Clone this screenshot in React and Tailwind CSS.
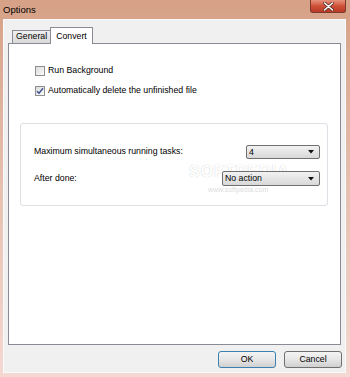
import React, { useState } from 'react';

const font = { fontFamily: '"Liberation Sans", Arial, sans-serif' };

function Checkbox({ checked, label, onChange }) {
  return (
    <label className="flex items-center h-[12px] cursor-default" onClick={onChange}>
      <span className="w-[10px] h-[10px] border border-[#8f8f8f] bg-gradient-to-br from-[#dcdcdc] to-[#fafafa] flex items-center justify-center">
        {checked && (
          <svg width="8" height="8" viewBox="0 0 8 8">
            <path d="M1 4.2 L3 6.3 L7 1.2" fill="none" stroke="#3b4f8a" strokeWidth="1.4" />
          </svg>
        )}
      </span>
      <span className="ml-[3px] text-[8.75px] text-black">{label}</span>
    </label>
  );
}

function Combo({ value, width, height }) {
  return (
    <div
      className={`${width} ${height} rounded-[2px] border border-[#707070] bg-gradient-to-b from-[#f2f2f2] to-[#d8d8d8] flex items-center justify-between pl-[2px] pr-[5px]`}
    >
      <span className="text-[8.75px] text-black leading-none">{value}</span>
      <svg width="6" height="4" viewBox="0 0 6 4">
        <path d="M0 0 H6 L3 3.5 Z" fill="#111" />
      </svg>
    </div>
  );
}

export default function App() {
  const [runBg, setRunBg] = useState(false);
  const [autoDelete, setAutoDelete] = useState(true);

  return (
    <div className="w-[350px] h-[377px] flex flex-col bg-gradient-to-b from-[#d6a186] via-[#e6c0b0] to-[#f4d8d2] overflow-hidden" style={font}>
      {/* title bar */}
      <div className="h-[19px] flex items-start justify-between">
        <span className="ml-[3px] mt-[3px] text-[9.5px] text-black">Options</span>
        <div className="mr-[4px] w-[36px] h-[13px] rounded-b-[3px] border border-t-0 border-[#7b3b2c] bg-gradient-to-b from-[#e6927c] via-[#cf5037] to-[#b83a25] flex items-center justify-center">
          <svg width="11" height="9" viewBox="0 0 11 9">
            <path d="M1.5 1 L9.5 8 M9.5 1 L1.5 8" stroke="#5a2a20" strokeWidth="3" strokeLinecap="round" />
            <path d="M1.5 1 L9.5 8 M9.5 1 L1.5 8" stroke="#ffffff" strokeWidth="1.6" strokeLinecap="round" />
          </svg>
        </div>
      </div>

      {/* client area */}
      <div className="ml-[3px] mr-[4px] mb-[4px] flex-1 bg-[#f0f0f0] border border-[#fafafa] flex flex-col">
        {/* tabs */}
        <div className="flex items-end ml-[6px] mt-[6px] h-[17px]">
          <div className="h-[13px] px-[3px] ml-[2px] border border-b-0 border-[#898c95] bg-gradient-to-b from-[#f0f0f0] to-[#d9d9d9] flex items-center text-[8.75px] text-black">
            General
          </div>
          <div className="h-[17px] px-[5px] -ml-[1px] border border-b-0 border-[#898c95] bg-white flex items-start pt-[2px] text-[8.75px] text-black relative top-[1px] z-10">
            Convert
          </div>
        </div>

        {/* tab panel */}
        <div className="ml-[4px] w-[333px] h-[302px] bg-white border border-[#898c95] relative">
          {/* watermark, behind the controls */}
          <div className="absolute left-[180px] top-[116px] text-[16px] tracking-[1px] text-white font-bold pointer-events-none [text-shadow:0_0_1px_#bbb]">
            SOFTPEDIA
          </div>
          <div className="absolute left-[199px] top-[141px] text-[7px] text-[#000] opacity-[0.15] pointer-events-none">
            www.softpedia.com
          </div>

          <div className="relative ml-[26px] mt-[21px] flex flex-col gap-[8px]">
            <Checkbox checked={runBg} label="Run Background" onChange={() => setRunBg(!runBg)} />
            <Checkbox checked={autoDelete} label="Automatically delete the unfinished file" onChange={() => setAutoDelete(!autoDelete)} />
          </div>

          <div className="relative ml-[11px] mt-[26px] w-[308px] h-[83px] rounded-[3px] border border-[#dcdfe3] pt-[21px] pl-[13px] pr-[7px]">
            <div className="h-[14px] flex items-center justify-between">
              <span className="text-[8.75px] text-black">Maximum simultaneous running tasks:</span>
              <Combo value="4" width="w-[74px]" height="h-[14px]" />
            </div>
            <div className="mt-[12px] h-[15px] flex items-center justify-between">
              <span className="text-[8.75px] text-black">After done:</span>
              <Combo value="No action" width="w-[98px]" height="h-[15px]" />
            </div>
          </div>
        </div>

        {/* buttons */}
        <div className="flex justify-end gap-[8px] mr-[3px] mt-[6px]">
          <button className="w-[58px] h-[17px] rounded-[3px] border border-[#3c7fb1] bg-gradient-to-b from-[#f4f4f4] via-[#e6e6e6] to-[#d0d0d0] text-[8.75px] text-black">
            OK
          </button>
          <button className="w-[58px] h-[17px] rounded-[3px] border border-[#707070] bg-gradient-to-b from-[#f4f4f4] via-[#e6e6e6] to-[#d0d0d0] text-[8.75px] text-black">
            Cancel
          </button>
        </div>
      </div>
    </div>
  );
}
